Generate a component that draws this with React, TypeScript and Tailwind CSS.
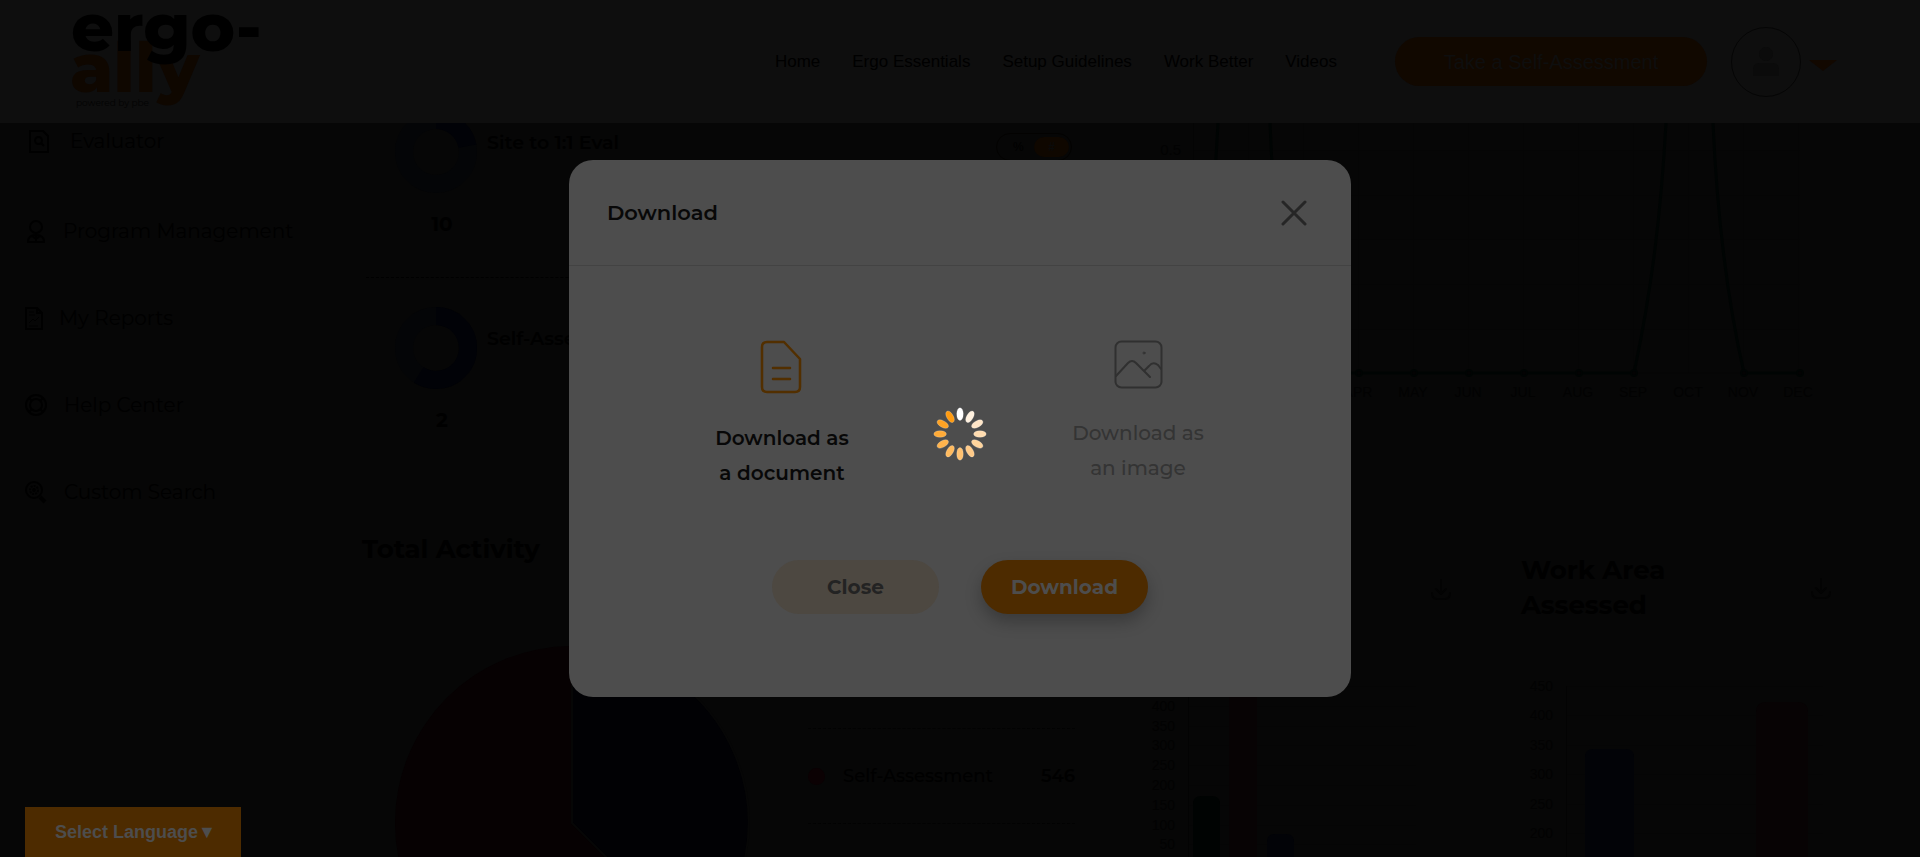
import type { ReactNode } from "react";

const navLinks = ["Home", "Ergo Essentials", "Setup Guidelines", "Work Better", "Videos"];

function Logo() {
  return (
    <svg width="240" height="123" viewBox="0 0 240 123" role="img" aria-label="ergo-ally powered by pbe" fontFamily="Montserrat, Inter, sans-serif">
      <text x="20" y="92" fontSize="69" fontWeight="800" fill="#0f0700">ally</text>
      <text x="21" y="51" fontSize="67" fontWeight="800" fill="#000000">ergo-</text>
      <text x="26" y="106" fontSize="9" fill="#030303">powered by pbe</text>
    </svg>
  );
}

function Header() {
  return (
    <header className="flex h-[123px] shrink-0 items-center bg-[#0e0e0e] pl-[50px] pr-[83px] font-['Liberation_Sans',sans-serif]">
      <a href="#home"><Logo /></a>
      <nav className="ml-auto flex gap-8 text-[17px] text-black">
        {navLinks.map((l) => (
          <a key={l} href="#nav">{l}</a>
        ))}
      </nav>
      <button className="ml-[58px] h-[49px] w-[312px] rounded-full bg-[#110800] text-xl text-[#0e0e0e]">
        Take a Self-Assessment
      </button>
      <button aria-label="Account" className="ml-6 flex items-center gap-2">
        <span className="flex size-[70px] items-center justify-center rounded-full border border-[#050505]">
          <svg width="26" height="30" viewBox="0 0 26 30" fill="#0b0b0b">
            <circle cx="13" cy="7" r="7" />
            <path d="M0 29v-7c0-4 3-6 7-6h12c4 0 7 2 7 6v7z" />
          </svg>
        </span>
        <svg className="mt-2" width="28" height="11" viewBox="0 0 28 11"><path d="M0 0h28L14 11z" fill="#120800" /></svg>
      </button>
    </header>
  );
}

const ico = { fill: "none", stroke: "#000", strokeWidth: 2 };

function SideItem({ icon, label, gap }: { icon: ReactNode; label: string; gap: string }) {
  return (
    <li className="h-[87px] first:h-[90px]">
      <a href="#section" className={"flex items-center " + gap}>
        {icon}
        <span className="text-xl leading-8">{label}</span>
      </a>
    </li>
  );
}

function Sidebar() {
  return (
    <aside className="w-[340px] shrink-0 pl-[25px] pt-[2px] text-black">
      <ul>
        <SideItem
          label="Evaluator"
          gap="gap-[21px] pl-1"
          icon={
            <svg width="20" height="23" viewBox="0 0 20 23" {...ico}>
              <path d="M1 1h13l5 5v16H1z" /><circle cx="9.500" cy="10.500" r="3.500" /><path d="m12 13 3 3" />
            </svg>
          }
        />
        <SideItem
          label="Program Management"
          gap="gap-[18px] pl-[2px]"
          icon={
            <svg width="18" height="23" viewBox="0 0 18 23" {...ico}>
              <circle cx="9" cy="7" r="6" /><path d="M1 22c0-5 3-7 8-7s8 2 8 7zM9 15v7M5 16l4 3 4-3" />
            </svg>
          }
        />
        <SideItem
          label="My Reports"
          gap="gap-4"
          icon={
            <svg width="18" height="23" viewBox="0 0 18 23" {...ico}>
              <path d="M1 1h11l5 5v16H1zM12 1v5h5" /><path strokeWidth="1" d="M4 5h5M4 8h6M4 16l4-4 2 2 4-4M4 19h9" />
            </svg>
          }
        />
        <SideItem
          label="Help Center"
          gap="gap-[17px]"
          icon={
            <svg width="22" height="22" viewBox="0 0 22 22" {...ico}>
              <circle cx="11" cy="11" r="10" /><circle cx="11" cy="11" r="6" />
              <path d="m4 4 3 3M18 4l-3 3M4 18l3-3M18 18l-3-3" />
            </svg>
          }
        />
        <SideItem
          label="Custom Search"
          gap="gap-[17px]"
          icon={
            <svg width="22" height="23" viewBox="0 0 22 23" {...ico}>
              <circle cx="9" cy="9" r="8" /><circle cx="9" cy="9" r="4" strokeDasharray="2 1" />
              <circle cx="9" cy="9" r="1" /><path strokeWidth="4" d="m15 16 5 5" />
            </svg>
          }
        />
      </ul>
    </aside>
  );
}

function Donut({ share, cut = 0 }: { share: number; cut?: number }) {
  const c = 2 * Math.PI * 32;
  return (
    <svg width="84" height={84 - cut} viewBox={`0 ${cut} 84 ${84 - cut}`} fill="none" strokeWidth="18">
      <circle cx="42" cy="42" r="32" stroke="#040507" />
      <circle cx="42" cy="42" r="32" stroke="#010207" strokeDasharray={`${c * share} ${c}`} transform="rotate(-90 42 42)" />
    </svg>
  );
}

const months = ["JAN", "FEB", "MAR", "APR", "MAY", "JUN", "JUL", "AUG", "SEP", "OCT", "NOV", "DEC"];

function LineChart() {
  return (
    <svg width="700" height="290" viewBox="0 0 700 290" fontFamily="Liberation Sans, sans-serif" fontSize="14" fill="#020202">
      <g stroke="#040404" fill="none">
        {[27, 72, 116, 161, 206].map((y) => (
          <path key={y} opacity="0.4" d={`M53 ${y}.5H660`} />
        ))}
        {months.map((m, i) => (
          <path key={m} opacity="0.4" d={`M${53 + i * 55}.5 0V250`} />
        ))}
        <path d="M53.500 0V250H660" />
      </g>
      <text x="41" y="32" textAnchor="end" fontSize="15">0.5</text>
      <g fill="none" stroke="#000403" strokeWidth="3">
        <path d="M53 250C67 180 73 90 78 0M130 0C133 90 145 170 163 250H494C512 165 521 90 526 0M573 0C577 90 588 180 604 250H660" />
        {[163, 219, 274, 329, 384, 439, 494, 604, 660].map((x) => (
          <circle key={x} cx={x} cy="250" r="3" fill="#030303" strokeWidth="2" />
        ))}
      </g>
      <g textAnchor="middle">
        {months.map((m, i) => (
          <text key={m} x={53 + i * 55} y="274">{m}</text>
        ))}
      </g>
    </svg>
  );
}

function Stats() {
  return (
    <section className="w-[800px] shrink-0 pl-[26px] pr-[68px] text-black">
      <div className="flex h-[155px] border-b border-dashed border-black pl-7">
        <div className="flex flex-col items-center">
          <Donut share={0.22} cut={13} />
          <b className="mt-[14px] pl-3 text-xl font-bold leading-8">10</b>
        </div>
        <h3 className="ml-[9px] mt-2 text-[19px] font-semibold leading-6">Site to 1:1 Eval</h3>
        <div className="ml-auto mt-[10px] flex h-[28px] w-[76px] items-center justify-between rounded-full border border-[#030201] pl-4 pr-[2px] font-['Liberation_Sans',sans-serif] text-xs">
          <button>%</button>
          <button className="h-5 w-[35px] rounded-full bg-[#0f0700] font-bold text-[#0a0a0a]">#</button>
        </div>
      </div>
      <div className="flex pl-7 pt-[28px]">
        <div className="flex flex-col items-center">
          <Donut share={0.59} />
          <b className="mt-[14px] pl-3 text-xl font-bold leading-8">2</b>
        </div>
        <h3 className="ml-[9px] mt-[21px] text-[19px] font-semibold leading-6">Self-Assessment</h3>
      </div>
    </section>
  );
}

function DownloadIcon() {
  return (
    <button aria-label="Download chart">
      <svg width="20" height="21" viewBox="0 0 20 21" fill="none" stroke="#030303" strokeWidth="2" strokeLinecap="round" strokeLinejoin="round">
        <path d="M10 1v13M5 10l5 5 5-5M1 14c0 4 2 6 5 6h8c3 0 5-2 5-6" />
      </svg>
    </button>
  );
}

function Axis({ from, top, step, rows, x, width }: { from: number; top: number; step: number; rows: number; x: number; width: number }) {
  return (
    <>
      {Array.from({ length: rows }, (_, i) => (
        <g key={i}>
          <path d={`M${x} ${Math.round(top + i * step)}.5H${width}`} stroke="#050505" />
          <text x={x - 13} y={top + i * step + 5} textAnchor="end" fill="#020202">{from - i * 50}</text>
        </g>
      ))}
      <path d={`M${x}.5 ${top}V190`} stroke="#030303" />
    </>
  );
}

function Charts() {
  return (
    <div className="flex text-black">
      <section className="w-[736px] shrink-0 pl-[22px]">
        <h2 className="text-[26px] font-bold leading-[35px]">Total Activity</h2>
        <div className="mt-[78px] flex pl-8">
          <svg width="356" height="356" viewBox="0 0 356 356">
            <circle cx="178" cy="178" r="177" fill="#060102" />
            <path d="M178 178V1A177 177 0 0 1 303 303Z" fill="#010104" stroke="#060606" strokeWidth="2" />
          </svg>
          <ul className="ml-[58px] w-[267px] text-lg">
            <li className="h-[84px] border-b border-dashed border-[#020202]" />
            <li className="flex h-[95px] items-center border-b border-dashed border-[#020202]">
              <span className="size-[17px] rounded-full bg-[#0b0103]" />
              <span className="ml-[18px] font-medium">Self-Assessment</span>
              <b className="ml-auto font-semibold">546</b>
            </li>
          </ul>
        </div>
      </section>
      <section className="w-[445px] shrink-0 pl-[60px] pr-[70px]">
        <div className="flex h-[68px] items-end justify-end"><DownloadIcon /></div>
        <svg className="mt-[78px]" width="290" height="190" viewBox="0 0 290 190" fontFamily="Liberation Sans, sans-serif" fontSize="14">
          <Axis from={450} top={8} step={19.800} rows={9} x={52} width={280} />
          <path d="M57 190V126q0-8 8-8h11q8 0 8 8V190z" fill="#000302" />
          <path d="M93 190V0h28V190z" fill="#070304" />
          <path d="M131 190V164q0-8 8-8h11q8 0 8 8V190z" fill="#020307" />
        </svg>
      </section>
      <section className="w-[310px] shrink-0">
        <div className="flex items-center justify-between pt-[21px]">
          <h2 className="w-40 text-[26px] font-bold leading-[35px]">Work Area Assessed</h2>
          <DownloadIcon />
        </div>
        <svg className="mt-[46px]" width="308" height="190" viewBox="0 0 308 190" fontFamily="Liberation Sans, sans-serif" fontSize="14">
          <Axis from={450} top={17} step={29.400} rows={6} x={45} width={302} />
          <path d="M64 190V88q0-8 8-8h33q8 0 8 8V190z" fill="#020307" />
          <path d="M235 190V43q0-10 10-10h32q10 0 10 10V190z" fill="#070304" />
        </svg>
      </section>
    </div>
  );
}

function DownloadDialog() {
  return (
    <div className="fixed inset-0 flex items-center justify-center">
      <div role="dialog" aria-labelledby="dlg-title" className="w-[782px] rounded-3xl bg-[#4d4d4d] pb-[83px]">
        <div className="flex h-[106px] items-center justify-between border-b border-[#434343] pl-[38px] pr-[44px]">
          <h2 id="dlg-title" className="text-[21px] font-semibold leading-8 text-[#080808]">Download</h2>
          <button aria-label="Close dialog">
            <svg width="26" height="26" viewBox="0 0 26 26" stroke="#262626" strokeWidth="3" strokeLinecap="round">
              <path d="m2 2 22 22M24 2 2 24" />
            </svg>
          </button>
        </div>
        <div className="flex h-[294px] px-[35px] pt-[74px] text-xl leading-[35px]">
          <button className="flex flex-1 flex-col items-center gap-[27px] font-semibold text-[#080808]">
            <svg width="44" height="54" viewBox="0 0 44 54" fill="none" stroke="#522f00" strokeWidth="2.500" strokeLinecap="round" strokeLinejoin="round">
              <path d="M7 2h17l16 17v28q0 5-5 5H7q-5 0-5-5V7q0-5 5-5zM13 28h17M13 39h17" />
            </svg>
            <span>Download as<br />a document</span>
          </button>
          <button className="flex flex-1 flex-col items-center gap-[27px] font-medium text-[#343434]">
            <svg width="49" height="49" viewBox="0 0 49 49" fill="none" stroke="#303030" strokeWidth="2" strokeLinecap="round">
              <rect x="1.500" y="1.500" width="46" height="46" rx="6" />
              <path d="M2 36 14 23q4-4 8 0l14 14M31 30l4-4q4-5 9-1l3 4" />
              <circle cx="30" cy="13" r="1" strokeWidth="1" />
            </svg>
            <span>Download as<br />an image</span>
          </button>
        </div>
        <div className="flex justify-center gap-[42px] text-xl font-bold">
          <button className="h-[54px] w-[167px] rounded-full bg-[#4d4841] text-[#232323]">Close</button>
          <button className="h-[54px] w-[167px] rounded-full bg-[#4d2b00] text-[#4d4d4d] shadow-[0_8px_16px_rgba(0,0,0,0.25)]">Download</button>
        </div>
      </div>
    </div>
  );
}

const petals = ["#ffffff", "#fff1df", "#ffe6c8", "#ffdcb0", "#ffd49c", "#ffca88", "#ffc170", "#ffba5e", "#ffb34c", "#ffab38", "#ffa324", "#ff9b10"];

function Spinner() {
  return (
    <div role="status" aria-label="Loading" className="fixed inset-0 flex items-center justify-center pt-[10px]">
      <svg width="54" height="54" viewBox="0 0 54 54">
        {petals.map((c, i) => (
          <rect key={c} x="23.800" y="0.800" width="6.400" height="12.600" rx="3.200" ry="5.500" fill={c} stroke="#ffffff" strokeOpacity="0.4" strokeWidth="0.500" transform={`rotate(${i * 30} 27 27)`} />
        ))}
      </svg>
    </div>
  );
}

export default function App() {
  return (
    <div className="flex h-screen flex-col overflow-hidden bg-[#060606] font-['Montserrat','Inter',sans-serif]">
      <Header />
      <div className="flex min-h-0 flex-1 overflow-hidden">
        <Sidebar />
        <main className="min-w-0 flex-1">
          <div className="flex h-[409px] items-start">
            <Stats />
            <LineChart />
          </div>
          <Charts />
        </main>
      </div>
      <button className="fixed bottom-0 left-[25px] flex h-[50px] w-[216px] items-center bg-[#4d2b00] pl-[30px] font-['Liberation_Sans',sans-serif] text-lg font-bold text-[#4d4d4d]">
        Select Language
        <span aria-hidden="true">▼</span>
      </button>
      <DownloadDialog />
      <Spinner />
    </div>
  );
}
